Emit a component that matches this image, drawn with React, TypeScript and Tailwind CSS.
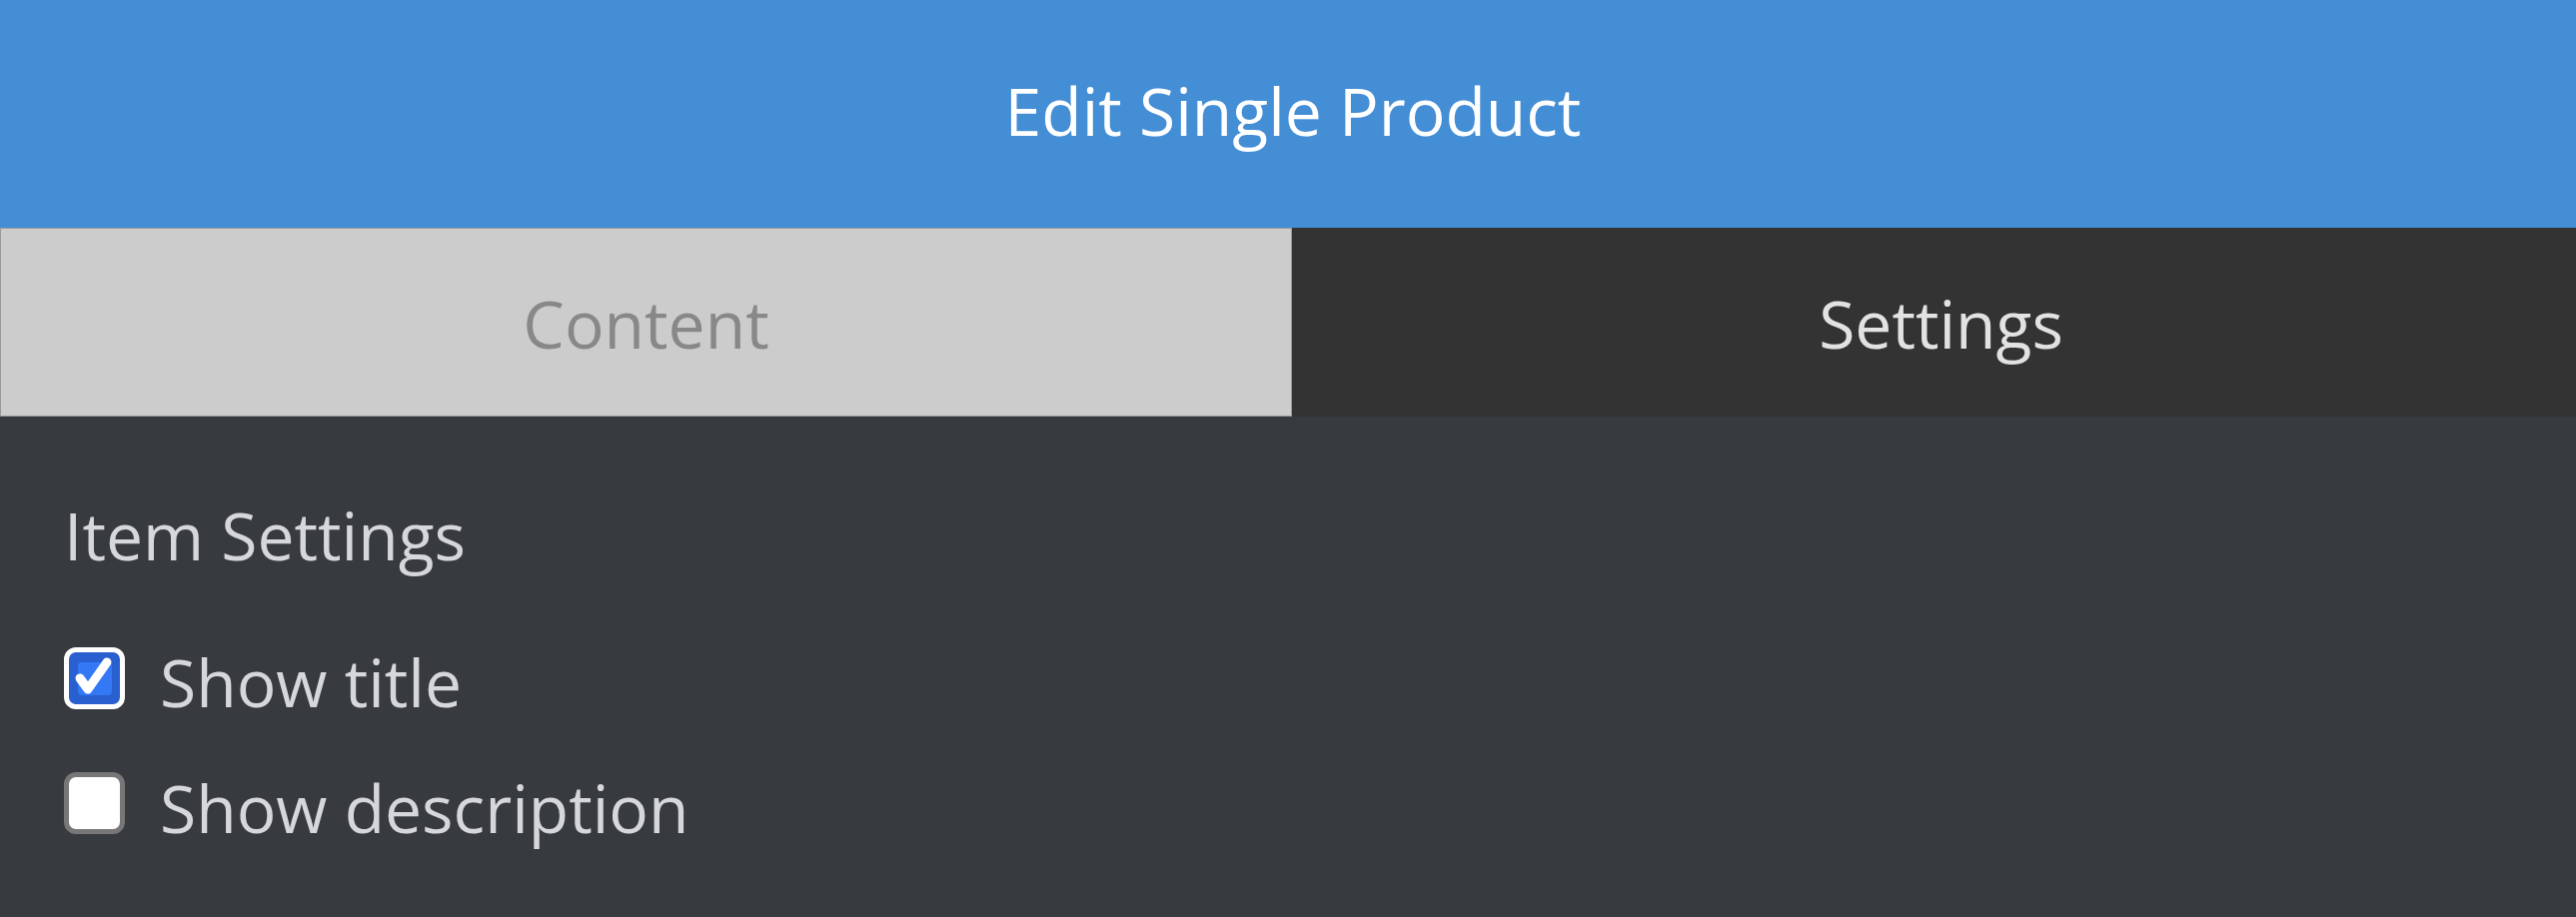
import { useState } from "react";

function Checkbox({ checked }: { checked: boolean }) {
  if (checked) {
    return (
      <div className="w-[61px] h-[62px] shrink-0 rounded-[12px] border-[5px] border-white bg-[#2a5fcf] flex items-center justify-center">
        <div className="relative w-[34px] h-[33px] rounded-[4px] bg-[#3478f6]">
          <svg
            className="absolute -left-[10px] -top-[12px]"
            width="51"
            height="52"
            viewBox="0 0 51 52"
            fill="none"
          >
            <path
              d="M12 28 L20 39 L39 12"
              stroke="white"
              strokeWidth="9"
              strokeLinecap="round"
              strokeLinejoin="round"
            />
          </svg>
        </div>
      </div>
    );
  }
  return (
    <div className="w-[61px] h-[62px] shrink-0 rounded-[12px] border-[5px] border-[#777777] bg-white" />
  );
}

export default function App() {
  const [tab, setTab] = useState<"content" | "settings">("settings");
  const [showTitle, setShowTitle] = useState(true);
  const [showDescription, setShowDescription] = useState(false);

  return (
    <div
      className="w-full h-[918px] flex flex-col bg-[#373a3e] text-[66px]"
      style={{ fontFamily: '"Open Sans", "Noto Sans", sans-serif' }}
    >
      {/* Header */}
      <div className="h-[228px] shrink-0 bg-[#448ed6] flex items-center justify-center pb-[8px] pl-[10px] text-white leading-[80px]">
        Edit Single Product
      </div>

      {/* Tabs */}
      <div className="h-[189px] shrink-0 flex leading-[80px]">
        <button
          onClick={() => setTab("content")}
          className="w-[1293px] shrink-0 bg-[#cccccc] text-[#888888] border border-[#999999] flex items-center justify-center"
        >
          Content
        </button>
        <button
          onClick={() => setTab("settings")}
          className="flex-1 bg-[#333333] text-[#e2e2e2] flex items-center justify-center pl-[14px]"
        >
          Settings
        </button>
      </div>

      {/* Settings panel */}
      <div className="flex-1 pl-[64px] pt-[78px] text-[#d5d7db] leading-[80px]">
        <div>Item Settings</div>

        <label
          className="mt-[67px] flex items-start gap-[35px] cursor-pointer"
          onClick={() => setShowTitle((v) => !v)}
        >
          <div className="mt-[6px]">
            <Checkbox checked={showTitle} />
          </div>
          <span>Show title</span>
        </label>

        <label
          className="mt-[46px] flex items-start gap-[35px] cursor-pointer"
          onClick={() => setShowDescription((v) => !v)}
        >
          <div className="mt-[5px]">
            <Checkbox checked={showDescription} />
          </div>
          <span>Show description</span>
        </label>
      </div>
    </div>
  );
}
